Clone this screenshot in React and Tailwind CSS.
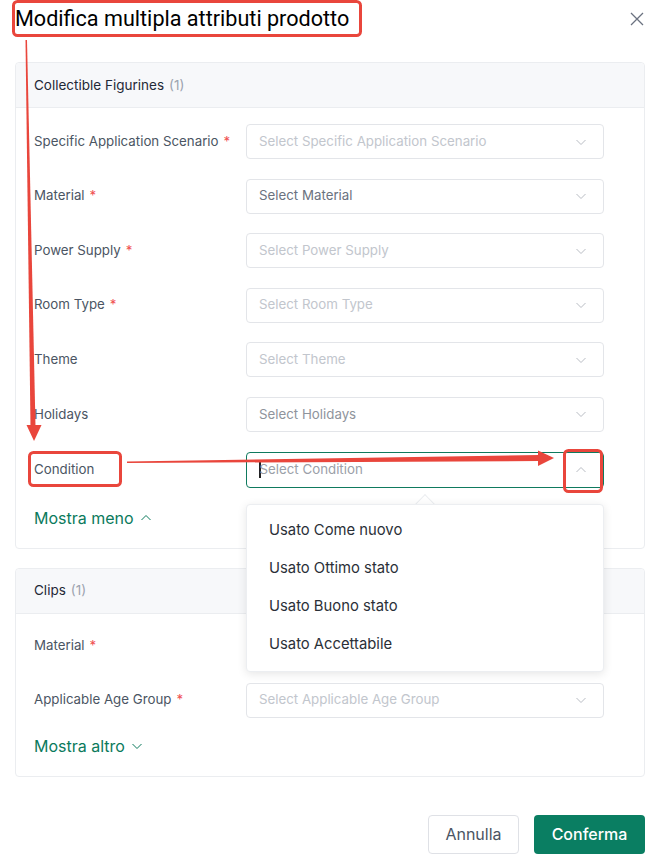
import React from "react";

const Chevron = ({ up = false, className = "" }) => (
  <svg width="12" height="12" viewBox="0 0 12 12" className={className} fill="none">
    {up ? (
      <path d="M1.5 8L6 3.5L10.5 8" stroke="currentColor" strokeWidth="1" />
    ) : (
      <path d="M1.5 4L6 8.5L10.5 4" stroke="currentColor" strokeWidth="1" />
    )}
  </svg>
);

const Select = ({ placeholder, tone = "light", active = false, children }) => {
  const toneCls =
    tone === "dark"
      ? "text-[#6b7280]"
      : tone === "mid"
      ? "text-[#8f949c]"
      : "text-[#c2c6cd]";
  return (
    <div className="relative w-[358px]">
      <div
        className={
          active
            ? "h-[36px] rounded-[4px] border border-[#0f7a5e] flex items-center pl-[12px] pr-[16px]"
            : "h-[35px] rounded-[4px] border border-[#e3e5e9] flex items-center pl-[12px] pr-[16px]"
        }
      >
        {active && <span className="w-[1.5px] h-[16px] bg-[#222] -mr-[1px]" />}
        <span className={`flex-1 text-[13.3px] ${active ? "text-[#9ba0a8]" : toneCls}`}>{placeholder}</span>
        <Chevron up={active} className="text-[#b9bdc4]" />
      </div>
      {children}
    </div>
  );
};

const Row = ({ label, required, placeholder, tone, active, children }) => (
  <div className="flex items-center">
    <div className="w-[212px] text-[13.3px] text-[#4b5563]">
      {label}
      {required && <span className="text-[#f05252] ml-[5px]">*</span>}
    </div>
    <Select placeholder={placeholder} tone={tone} active={active}>
      {children}
    </Select>
  </div>
);

const Dropdown = () => (
  <div className="absolute left-0 top-[52px] w-[358px] z-10">
    <div className="absolute -top-[7px] left-[172px] w-[14px] h-[14px] rotate-45 bg-white border-l border-t border-[#eceef1]" />
    <div className="relative bg-white rounded-[4px] border border-[#eceef1] shadow-[0_2px_10px_rgba(0,0,0,0.10)] py-[7px]">
      {["Usato Come nuovo", "Usato Ottimo stato", "Usato Buono stato", "Usato Accettabile"].map((t) => (
        <div key={t} className="h-[38px] flex items-center pl-[22px] text-[14.8px] text-[#2a2f37]">
          {t}
        </div>
      ))}
    </div>
  </div>
);

export default function App() {
  return (
    <div
      className="relative w-[668px] h-[864px] bg-white overflow-hidden"
      style={{ fontFamily: "Inter, 'Noto Sans', sans-serif" }}
    >
      <div className="flex items-center justify-between h-[37px] pl-[15px] pr-[24px]">
        <h1
          className="text-[21.6px] text-black leading-none"
          style={{ fontFamily: "Roboto, 'Liberation Sans', sans-serif" }}
        >
          Modifica multipla attributi prodotto
        </h1>
        <svg width="14" height="14" viewBox="0 0 14 14" fill="none" className="text-[#6b7280]">
          <path d="M1 1L13 13M13 1L1 13" stroke="currentColor" strokeWidth="1.3" />
        </svg>
      </div>

      <div className="pl-[15px] pr-[23px] mt-[25px]">
        {/* Section 1 */}
        <div className="border border-[#ebedf0] rounded-[4px]">
          <div className="h-[45px] bg-[#f7f8fa] border-b border-[#ebedf0] flex items-center pl-[18px] text-[13.5px] text-[#1f2937] rounded-t-[4px]">
            Collectible Figurines<span className="text-[#9ca3af] ml-[5px]">(1)</span>
          </div>
          <div className="pl-[18px] pt-[16px] pb-[19px]">
            <div className="flex flex-col gap-[19.6px]">
              <Row label="Specific Application Scenario" required placeholder="Select Specific Application Scenario" />
              <Row label="Material" required placeholder="Select Material" tone="dark" />
              <Row label="Power Supply" required placeholder="Select Power Supply" />
              <Row label="Room Type" required placeholder="Select Room Type" />
              <Row label="Theme" placeholder="Select Theme" />
              <Row label="Holidays" placeholder="Select Holidays" tone="mid" />
              <Row label="Condition" placeholder="Select Condition" active>
                <Dropdown />
              </Row>
            </div>
            <div className="mt-[19px] h-[22px] flex items-center gap-[6px] text-[16px] text-[#0b7a5c]">
              Mostra meno
              <Chevron up className="text-[#0b7a5c]" />
            </div>
          </div>
        </div>

        {/* Section 2 */}
        <div className="border border-[#ebedf0] rounded-[4px] mt-[19px]">
          <div className="h-[45px] bg-[#f7f8fa] border-b border-[#ebedf0] flex items-center pl-[18px] text-[13.5px] text-[#1f2937] rounded-t-[4px]">
            Clips<span className="text-[#9ca3af] ml-[5px]">(1)</span>
          </div>
          <div className="pl-[18px] pt-[15px] pb-[19px]">
            <div className="flex flex-col gap-[19px]">
              <Row label="Material" required placeholder="" tone="dark" />
              <Row label="Applicable Age Group" required placeholder="Select Applicable Age Group" />
            </div>
            <div className="mt-[17px] h-[22px] flex items-center gap-[6px] text-[16px] text-[#0b7a5c]">
              Mostra altro
              <Chevron className="text-[#0b7a5c]" />
            </div>
          </div>
        </div>

        {/* Footer */}
        <div className="flex justify-end gap-[15px] mt-[38px]">
          <button className="w-[91px] h-[39px] rounded-[4px] border border-[#dfe1e6] bg-white text-[16px] text-[#4b5563]">
            Annulla
          </button>
          <button className="w-[111px] h-[39px] rounded-[4px] bg-[#0a7e62] text-[16px] text-white font-medium">
            Conferma
          </button>
        </div>
      </div>

      {/* Annotations overlay */}
      <svg
        className="absolute inset-0 pointer-events-none z-20"
        width="668"
        height="864"
        viewBox="0 0 668 864"
      >
        <rect x="13.5" y="1.5" width="347" height="34" rx="4" fill="none" stroke="#e9463c" strokeWidth="3" />
        <polygon points="25.5,40 27,40 35.5,426 30.5,426" fill="#e9463c" />
        <polygon points="26.5,425 41.5,425 34,441" fill="#e9463c" />
        <rect x="29.5" y="452.5" width="91" height="33" rx="4" fill="none" stroke="#e9463c" strokeWidth="3" />
        <polygon points="127,461.5 127,463 539,461 539,455" fill="#e9463c" />
        <polygon points="538,450.5 538,466 554,458" fill="#e9463c" />
        <rect x="564.5" y="450.5" width="37" height="41" rx="4" fill="none" stroke="#e9463c" strokeWidth="3" />
      </svg>
    </div>
  );
}
